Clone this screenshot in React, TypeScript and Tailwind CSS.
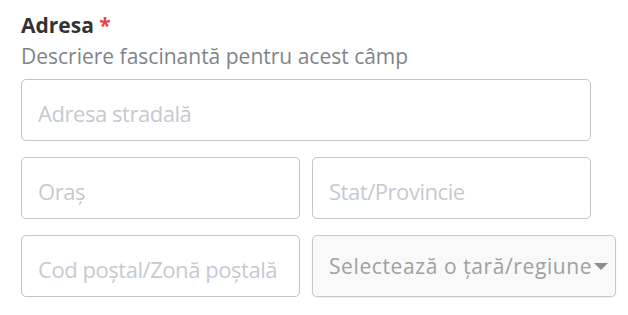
import React from "react";

export default function App() {
  const font = { fontFamily: '"Open Sans", "Noto Sans", sans-serif' };
  const inputCls =
    "h-[62px] w-full rounded-[5px] border border-[#c4c4c4] bg-white pl-4 pr-2 pt-[5px] text-[22px] tracking-[-0.45px] text-[#333] outline-none placeholder:text-[#c5cad2]";
  return (
    <div className="min-h-[315px] w-[628px] bg-white pl-[21px] pt-[11px]" style={font}>
      <div className="text-[21px] font-bold leading-[28px] text-[#333]">
        Adresa <span className="text-[#e5454f]">*</span>
      </div>
      <div className="mt-[3px] text-[21px] leading-[28px] text-[#80848a]">
        Descriere fascinantă pentru acest câmp
      </div>
      <div className="mt-[9px] flex w-[570px] flex-col gap-[16px]">
        <input className={inputCls} placeholder="Adresa stradală" style={font} />
        <div className="grid grid-cols-[279px_279px] gap-[12px]">
          <input className={inputCls} placeholder="Oraș" style={font} />
          <input className={inputCls} placeholder="Stat/Provincie" style={font} />
        </div>
        <div className="grid grid-cols-[279px_304px] gap-[12px]">
          <input className={inputCls} placeholder="Cod poștal/Zonă poștală" style={font} />
          <div className="relative flex h-[62px] items-center overflow-hidden whitespace-nowrap rounded-[5px] border border-[#c8c8c8] bg-[#f9f9f9] pl-[16px] pt-[2px] shadow-[0_1px_2px_rgba(0,0,0,0.08)]">
            <span className="text-[21px] tracking-[0.6px] text-[#a0a0a0]">Selectează o țară/regiune</span>
            <svg className="absolute left-[281px] top-[27px]" width="14" height="8" viewBox="0 0 14 8">
              <path d="M0 0 L14 0 L7 7 Z" fill="#8e8e8e" />
            </svg>
          </div>
        </div>
      </div>
    </div>
  );
}
